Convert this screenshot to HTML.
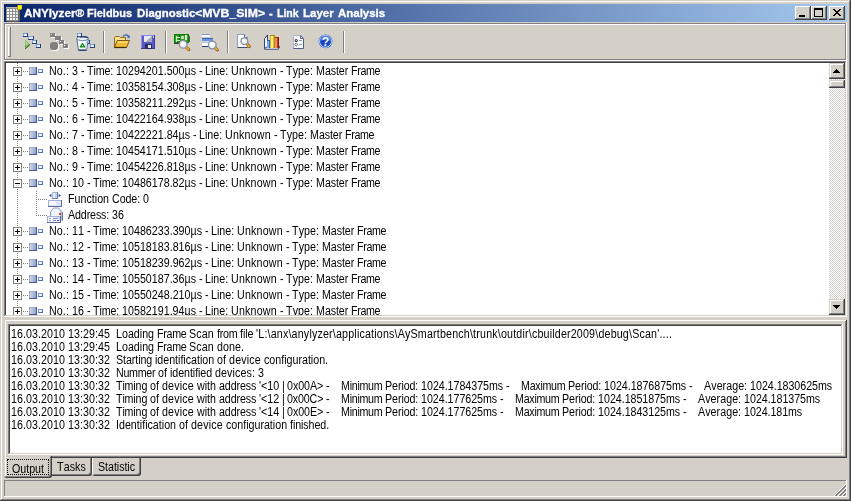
<!DOCTYPE html><html><head><meta charset="utf-8"><title>ANYlyzer</title><style>
    *{box-sizing:border-box;margin:0;padding:0}
    html,body{width:851px;height:501px;overflow:hidden;background:#d4d0c8}
    body{position:relative;font-family:"Liberation Sans",sans-serif;font-size:12px;color:#000}
    #w{position:absolute;left:0;top:0;width:851px;height:501px;will-change:transform}
.a{position:absolute}
    .t{position:absolute;white-space:pre;font-kerning:none;font-size:12px;line-height:14px;height:14px;transform-origin:0 0;transform:scaleX(.89)}
    .btn{position:absolute;background:#d4d0c8;box-shadow:inset -1px -1px 0 #404040,inset 1px 1px 0 #d4d0c8,inset -2px -2px 0 #808080,inset 2px 2px 0 #fff}
    .cbtn{position:absolute;background:#d4d0c8;box-shadow:inset -1px -1px 0 #404040,inset 1px 1px 0 #fff,inset -2px -2px 0 #808080}
    .sunk{position:absolute;background:#fff;box-shadow:inset -1px -1px 0 #fff,inset 1px 1px 0 #808080,inset -2px -2px 0 #d4d0c8,inset 2px 2px 0 #404040}
    .sep{position:absolute;width:2px;height:22px;top:31px;border-left:1px solid #808080;border-right:1px solid #fff}
    .ex{position:absolute;width:9px;height:9px;border:1px solid #808080;background:#fff}
    .ex i{position:absolute;left:1px;top:3px;width:5px;height:1px;background:#000}
    .ex b{position:absolute;left:3px;top:1px;width:1px;height:5px;background:#000}
    .hd{position:absolute;height:1px;background:repeating-linear-gradient(90deg,#808080 0 1px,transparent 1px 2px)}
    .vd{position:absolute;width:1px;background:repeating-linear-gradient(180deg,#808080 0 1px,transparent 1px 2px)}
    .n1{position:absolute;width:8px;height:8px;background:linear-gradient(90deg,#dcdee8,#8298cc);box-shadow:inset -1px -1px 0 #405a94,inset 1px 1px 0 #a0acc8}
    .n2{position:absolute;width:5px;height:4px;background:#eef4ff;border:1px solid #4c6cac;border-top-color:#7c98d0;border-left-color:#7c98d0}
    </style></head><body><div id="w"><div class="a" style="left:0;top:0;width:851px;height:501px;box-shadow:inset -1px -1px 0 #404040,inset 1px 1px 0 #d4d0c8,inset -2px -2px 0 #808080,inset 2px 2px 0 #fff"></div>
<div class="a" style="left:4px;top:4px;width:843px;height:18px;background:linear-gradient(90deg,#0a246a,#a6caf0)"></div>
<svg class="a" style="left:5px;top:4px" width="18" height="18" viewBox="0 0 18 18" shape-rendering="crispEdges"><rect x="1" y="3" width="13" height="14" fill="#909090"/><rect x="1" y="3" width="12" height="1" fill="#b8b8b8"/><rect x="13" y="5" width="2" height="12" fill="#686868"/><rect x="2" y="17" width="12" height="1" fill="#50505a"/><rect x="2" y="5" width="2" height="2" fill="#fff"/><rect x="5" y="5" width="2" height="2" fill="#fff"/><rect x="8" y="5" width="2" height="2" fill="#fff"/><rect x="11" y="5" width="2" height="2" fill="#e4e4e4"/><rect x="2" y="8" width="2" height="2" fill="#fff"/><rect x="5" y="8" width="2" height="2" fill="#fff"/><rect x="8" y="8" width="2" height="2" fill="#fff"/><rect x="11" y="8" width="2" height="2" fill="#e4e4e4"/><rect x="2" y="11" width="2" height="2" fill="#fff"/><rect x="5" y="11" width="2" height="2" fill="#fff"/><rect x="8" y="11" width="2" height="2" fill="#fff"/><rect x="11" y="11" width="2" height="2" fill="#e4e4e4"/><rect x="2" y="14" width="2" height="2" fill="#fff"/><rect x="5" y="14" width="2" height="2" fill="#fff"/><rect x="8" y="14" width="2" height="2" fill="#fff"/><rect x="11" y="14" width="2" height="2" fill="#e4e4e4"/><rect x="12" y="1" width="5" height="5" fill="#a8a010"/><rect x="13" y="1" width="4" height="4" fill="#e8e000"/><rect x="13" y="2" width="3" height="3" fill="#ffff10"/><rect x="12" y="1" width="1" height="1" fill="#605c20"/><rect x="16" y="5" width="1" height="1" fill="#605c20"/></svg>
<div class="a" id="title" style="left:4px;top:5px;height:16px;line-height:16px;font-size:11px;font-weight:bold;color:#fff;white-space:pre;font-kerning:none;-webkit-text-stroke:0.3px #fff"><span class="a" style="left:19.50px;top:0;transform-origin:0 0;transform:scaleX(1.066)">ANYlyzer® </span><span class="a" style="left:83.00px;top:0;transform-origin:0 0;transform:scaleX(0.998)">Fieldbus </span><span class="a" style="left:132.50px;top:0;transform-origin:0 0;transform:scaleX(1.037)">Diagnostic </span><span class="a" style="left:191.40px;top:0;transform-origin:0 0;transform:scaleX(1.113)">&lt;MVB_SIM&gt; </span><span class="a" style="left:265.00px;top:0;transform-origin:0 0;transform:scaleX(1.000)">- </span><span class="a" style="left:272.50px;top:0;transform-origin:0 0;transform:scaleX(0.958)">Link </span><span class="a" style="left:298.50px;top:0;transform-origin:0 0;transform:scaleX(1.047)">Layer </span><span class="a" style="left:333.50px;top:0;transform-origin:0 0;transform:scaleX(1.041)">Analysis </span></div>
<div class="cbtn" style="left:795px;top:6px;width:16px;height:14px"><div class="a" style="left:4px;top:9px;width:6px;height:2px;background:#000"></div></div>
<div class="cbtn" style="left:811px;top:6px;width:16px;height:14px"><div class="a" style="left:3px;top:2px;width:9px;height:9px;border:1px solid #000;border-top-width:2px"></div></div>
<div class="cbtn" style="left:829px;top:6px;width:16px;height:14px"><svg class="a" style="left:4px;top:3px" width="8" height="7" viewBox="0 0 8 7" shape-rendering="crispEdges"><path d="M0 0h2v1h1v1h2v-1h1v-1h2v1h-1v1h-1v1h-1v1h1v1h1v1h1v1h-2v-1h-1v-1h-2v1h-1v1h-2v-1h1v-1h1v-1h1v-1h-1v-1h-1v-1h-1z" fill="#000"/></svg></div>
<div class="a" style="left:4px;top:23px;width:843px;height:38px;box-shadow:inset -1px -1px 0 #fff,inset 1px 1px 0 #808080,inset -2px -2px 0 #808080,inset 2px 2px 0 #fff"></div>
<div class="a" style="left:8px;top:27px;width:3px;height:30px;box-shadow:inset -1px -1px 0 #808080,inset 1px 1px 0 #fff"></div>
<div class="sep" style="left:103px"></div>
<div class="sep" style="left:165px"></div>
<div class="sep" style="left:227px"></div>
<div class="sep" style="left:343px"></div>
<svg class="a" style="left:23px;top:33px" width="19" height="17" viewBox="0 0 19 17" shape-rendering="crispEdges"><rect x="0" y="0" width="5" height="4" fill="#24426f"/><rect x="0" y="0" width="4" height="3" fill="#7f9fd6"/><rect x="1" y="1" width="3" height="2" fill="#e4eeff"/><rect x="5" y="3" width="6" height="4" fill="#24426f"/><rect x="5" y="3" width="5" height="3" fill="#7f9fd6"/><rect x="6" y="4" width="4" height="2" fill="#e4eeff"/><rect x="9" y="7" width="5" height="4" fill="#24426f"/><rect x="9" y="7" width="4" height="3" fill="#7f9fd6"/><rect x="10" y="8" width="3" height="2" fill="#e4eeff"/><rect x="13" y="11" width="5" height="4" fill="#24426f"/><rect x="13" y="11" width="4" height="3" fill="#7f9fd6"/><rect x="14" y="12" width="3" height="2" fill="#e4eeff"/><g shape-rendering="auto"><path d="M2 7L7.2 11.5L2 16Z" fill="#6cb04c"/><path d="M2.3 7.8L6 11.3L2.3 12.5Z" fill="#a8d890"/><path d="M2 16L7.2 11.5" stroke="#2c5a1c" stroke-width="1"/></g></svg>
<svg class="a" style="left:50px;top:33px" width="20" height="19" viewBox="0 0 20 19" shape-rendering="crispEdges"><rect x="1" y="1" width="5" height="4" fill="#fff"/><rect x="0" y="0" width="5" height="4" fill="#808080"/><rect x="1" y="1" width="1" height="1" fill="#fff"/><rect x="6" y="4" width="6" height="4" fill="#fff"/><rect x="5" y="3" width="6" height="4" fill="#808080"/><rect x="10" y="8" width="5" height="4" fill="#fff"/><rect x="9" y="7" width="5" height="4" fill="#808080"/><rect x="10" y="8" width="1" height="1" fill="#fff"/><rect x="14" y="12" width="5" height="4" fill="#fff"/><rect x="13" y="11" width="5" height="4" fill="#808080"/><rect x="14" y="12" width="1" height="1" fill="#fff"/><g shape-rendering="auto"><rect x="1" y="10" width="8" height="8" rx="3" fill="#fff"/><rect x="0" y="9" width="8" height="8" rx="3" fill="#808080"/></g></svg>
<svg class="a" style="left:76px;top:33px" width="20" height="19" viewBox="0 0 20 19" shape-rendering="crispEdges"><rect x="1" y="0" width="5" height="4" fill="#24426f"/><rect x="1" y="0" width="4" height="3" fill="#7f9fd6"/><rect x="2" y="1" width="3" height="2" fill="#e4eeff"/><rect x="10" y="7" width="4" height="4" fill="#24426f"/><rect x="10" y="7" width="3" height="3" fill="#7f9fd6"/><rect x="11" y="8" width="2" height="2" fill="#e4eeff"/><rect x="14" y="11" width="5" height="4" fill="#24426f"/><rect x="14" y="11" width="4" height="3" fill="#7f9fd6"/><rect x="15" y="12" width="3" height="2" fill="#e4eeff"/><g shape-rendering="auto"><path d="M0.8 5.5L12.2 5.5L10.6 17.2L2.4 17.2Z" fill="#f4f8ff" stroke="#5a6c94" stroke-width="1"/><path d="M9.6 7L11.6 7L10.2 16.8L9 16.8Z" fill="#ccd8f0"/><ellipse cx="6.5" cy="5.6" rx="6" ry="1.9" fill="#f0f5ff" stroke="#6c7ca4" stroke-width="1"/><path d="M4 4.1Q9 3 12.3 5" fill="none" stroke="#24426f" stroke-width="1.4"/><path d="M2.6 17.2L10.4 17.2" stroke="#24426f" stroke-width="1.4"/><path d="M6.5 10.6L8.6 13.9L4.4 13.9Z" fill="#fff" stroke="#0c8a10" stroke-width="1.3" stroke-linejoin="round"/></g></svg>
<svg class="a" style="left:114px;top:34px" width="17" height="15" viewBox="0 0 17 15" shape-rendering="crispEdges"><g shape-rendering="auto"><path d="M0.5 13.5L0.5 3.5L1.5 2.5L5.5 2.5L6.5 3.5L11.5 3.5L11.5 6" fill="#f6e08a" stroke="#8c6c1c" stroke-width="1"/><path d="M0.5 13.5L3.2 6.5L15.5 6.5L12.5 13.5Z" fill="#f2bc30" stroke="#7c5a10" stroke-width="1"/><path d="M3.6 7.4L14 7.4L13.4 8.8L3.1 8.8Z" fill="#fbe08c"/><path d="M0.5 13.5L12.5 13.5" stroke="#3c2c08" stroke-width="1.2"/><path d="M9 2.6C10.5 0.2 13.6 0.2 14.8 2.8" fill="none" stroke="#3a66b4" stroke-width="1.3"/><path d="M12.8 3L15.8 1.2L15.6 4.6Z" fill="#3a66b4"/></g></svg>
<svg class="a" style="left:141px;top:35px" width="14" height="14" viewBox="0 0 14 14" shape-rendering="crispEdges"><rect x="0" y="0" width="14" height="14" fill="#5858c8"/><rect x="0" y="0" width="1" height="14" fill="#8c8ce4"/><rect x="0" y="0" width="14" height="1" fill="#8c8ce4"/><rect x="13" y="0" width="1" height="14" fill="#38389c"/><rect x="0" y="13" width="14" height="1" fill="#38389c"/><rect x="3" y="1" width="8" height="6" fill="#e8e8ec"/><g shape-rendering="auto"><path d="M11 1L11 7L4.5 7Z" fill="#a8a8b4"/></g><rect x="4" y="9" width="7" height="5" fill="#2c2c5c"/><rect x="7" y="10" width="3" height="3" fill="#e8e8ec"/><rect x="12" y="1" width="1" height="2" fill="#c8c8ff"/></svg>
<svg class="a" style="left:174px;top:34px" width="18" height="18" viewBox="0 0 18 18" shape-rendering="crispEdges"><rect x="0" y="0" width="15" height="9" fill="#10780c"/><rect x="1" y="1" width="13" height="7" fill="#28a41c"/><rect x="2" y="2" width="1" height="6" fill="#c8f0c0"/><rect x="5" y="1" width="1" height="7" fill="#0c5c08"/><rect x="2" y="3" width="4" height="1" fill="#c8f0c0"/><rect x="2" y="6" width="4" height="1" fill="#c8f0c0"/><rect x="7" y="2" width="3" height="3" fill="#d8c8e8"/><rect x="11" y="1" width="2" height="5" fill="#d0f0c8"/><rect x="15" y="2" width="1" height="6" fill="#606060"/><rect x="0" y="9" width="6" height="1" fill="#404040"/><g shape-rendering="auto"><path d="M11.5 12.7L14.8 15.6" stroke="#8a5a20" stroke-width="3" stroke-linecap="round"/><path d="M12.0 13.2L14.5 15.299999999999999" stroke="#f4a838" stroke-width="1.8" stroke-linecap="round"/><circle cx="9.2" cy="10.4" r="3.8" fill="#e6f0fb" stroke="#8a8f98" stroke-width="1.3"/><circle cx="8.399999999999999" cy="9.6" r="1.9999999999999998" fill="#fff"/></g></svg>
<svg class="a" style="left:202px;top:34px" width="18" height="19" viewBox="0 0 18 19" shape-rendering="crispEdges"><rect x="0" y="0" width="8" height="3" fill="#fff"/><rect x="0" y="0" width="8" height="1" fill="#7c9cd4"/><rect x="0" y="3" width="8" height="1" fill="#b4c4e4"/><rect x="0" y="4" width="11" height="4" fill="#6c94e0"/><rect x="0" y="4" width="11" height="1" fill="#3c64b4"/><rect x="0" y="7" width="11" height="1" fill="#c8d8f8"/><rect x="0" y="9" width="7" height="4" fill="#fff"/><rect x="0" y="12" width="7" height="1" fill="#1c3c7c"/><rect x="0" y="8" width="7" height="1" fill="#b4c4e4"/><g shape-rendering="auto"><path d="M12.6 13.3L15.4 16" stroke="#8a5a20" stroke-width="3" stroke-linecap="round"/><path d="M13.2 13.8L15.1 15.7" stroke="#f4a838" stroke-width="1.8" stroke-linecap="round"/><circle cx="10.3" cy="11" r="3.8" fill="#e6f0fb" stroke="#8a8f98" stroke-width="1.3"/><circle cx="9.5" cy="10.2" r="1.9999999999999998" fill="#fff"/></g></svg>
<svg class="a" style="left:237px;top:34px" width="16" height="16" viewBox="0 0 16 16" shape-rendering="crispEdges"><g shape-rendering="auto"><path d="M0.5 0.5L7.5 0.5L10.5 3.5L10.5 13.5L0.5 13.5Z" fill="#fbfcff" stroke="#8c9cc0" stroke-width="1"/><path d="M7.5 0.5L7.5 3.5L10.5 3.5" fill="#dfe6f6" stroke="#5c6c94" stroke-width="1"/><path d="M0.5 13.5L10.5 13.5" stroke="#3c4c74" stroke-width="1"/><path d="M9.4 9.2L12.4 12.6" stroke="#8a5a20" stroke-width="3" stroke-linecap="round"/><path d="M9.9 9.8L12.1 12.299999999999999" stroke="#f4a838" stroke-width="1.8" stroke-linecap="round"/><circle cx="7.4" cy="7.2" r="3.4" fill="#e6f0fb" stroke="#8a8f98" stroke-width="1.3"/><circle cx="6.6000000000000005" cy="6.4" r="1.5999999999999999" fill="#fff"/></g></svg>
<svg class="a" style="left:264px;top:34px" width="17" height="17" viewBox="0 0 17 17" shape-rendering="crispEdges"><g shape-rendering="auto"><path d="M0.5 14.6L0.5 4.6L3.5 0.9L3.5 12.4" fill="#f4f7fd" stroke="#2c4474" stroke-width="1"/><path d="M0.5 14.7L3.5 12.4L15.7 12.4L14.4 15.2L0.5 15.2Z" fill="#fff" stroke="#2c4474" stroke-width="1"/></g><rect x="3" y="6" width="3" height="8" fill="#3c6cd0"/><rect x="3" y="6" width="2" height="8" fill="#7ca4f0"/><rect x="3" y="6" width="3" height="1" fill="#2c54b0"/><rect x="6" y="1" width="5" height="13" fill="#d8b818"/><rect x="7" y="2" width="2" height="12" fill="#fcf088"/><rect x="6" y="1" width="5" height="1" fill="#a08810"/><rect x="10" y="2" width="1" height="12" fill="#b09410"/><rect x="11" y="3" width="4" height="11" fill="#c43818"/><rect x="11" y="4" width="2" height="10" fill="#f08868"/><rect x="14" y="3" width="1" height="11" fill="#8c2008"/><rect x="11" y="3" width="4" height="1" fill="#a42c10"/></svg>
<svg class="a" style="left:293px;top:35px" width="12" height="15" viewBox="0 0 12 15" shape-rendering="crispEdges"><g shape-rendering="auto"><path d="M0.5 0.5L7.5 0.5L10.5 3.5L10.5 13.5L0.5 13.5Z" fill="#fbfcff" stroke="#a8b4d0" stroke-width="1"/><path d="M7.5 0.5L7.5 3.5L10.5 3.5Z" fill="#c8d4ec" stroke="#5c6c94" stroke-width="1"/><path d="M0.5 13.5L10.5 13.5M10.5 4L10.5 13.5" stroke="#4c5c88" stroke-width="1"/><circle cx="3.2" cy="5.4" r="1.5" fill="#202020"/><circle cx="3.2" cy="5.4" r="0.6" fill="#fff"/><circle cx="3.2" cy="9.6" r="1.3" fill="#fff" stroke="#505050" stroke-width="0.8"/><path d="M6 5.5L9 5.5M6 9.5L9 9.5" stroke="#9098a8" stroke-width="1"/></g></svg>
<svg class="a" style="left:318px;top:34px" width="16" height="16" viewBox="0 0 16 16" shape-rendering="crispEdges"><g shape-rendering="auto"><circle cx="7.5" cy="7.3" r="6.9" fill="#2f62d8"/><circle cx="7.5" cy="7.3" r="5.9" fill="none" stroke="#e8f0ff" stroke-width="1"/><circle cx="7.5" cy="7.3" r="5.3" fill="#1846c0"/><path d="M1.6 7.3A5.9 5.9 0 0 1 13.4 7.3A8 5 0 0 0 1.6 7.3Z" fill="#4a80e8"/><text x="7.6" y="11.6" font-family="Liberation Sans,sans-serif" font-size="12" font-weight="bold" fill="#fff" text-anchor="middle">?</text></g></svg>
<div class="sunk" style="left:4px;top:61px;width:843px;height:256px"></div>
<div class="a" id="tree" style="left:6px;top:63px;width:823px;height:252px;overflow:hidden;background:#fff">
<div class="vd" style="left:11px;top:0;height:252px"></div>
<div class="hd" style="left:17px;top:8px;width:6px"></div>
<div class="ex" style="left:7px;top:4px"><i></i><b></b></div>
<div class="n1" style="left:23px;top:4px"></div><div class="n2" style="left:32px;top:6px"></div>
<div class="t" style="left:43px;top:1px"><span style="letter-spacing:0.100px">No.: </span><span style="letter-spacing:0.052px">3 </span><span style="letter-spacing:-0.294px">- </span><span style="letter-spacing:-0.125px">Time: </span><span style="letter-spacing:0.018px">10294201.500µs </span><span style="letter-spacing:-0.294px">- </span><span style="letter-spacing:-0.024px">Line: </span><span style="letter-spacing:0.212px">Unknown </span><span style="letter-spacing:-0.294px">- </span><span style="letter-spacing:0.060px">Type: </span><span style="letter-spacing:-0.097px">Master </span><span style="letter-spacing:-0.417px">Frame</span></div>
<div class="hd" style="left:17px;top:24px;width:6px"></div>
<div class="ex" style="left:7px;top:20px"><i></i><b></b></div>
<div class="n1" style="left:23px;top:20px"></div><div class="n2" style="left:32px;top:22px"></div>
<div class="t" style="left:43px;top:17px"><span style="letter-spacing:0.100px">No.: </span><span style="letter-spacing:0.052px">4 </span><span style="letter-spacing:-0.294px">- </span><span style="letter-spacing:-0.125px">Time: </span><span style="letter-spacing:0.018px">10358154.308µs </span><span style="letter-spacing:-0.294px">- </span><span style="letter-spacing:-0.024px">Line: </span><span style="letter-spacing:0.212px">Unknown </span><span style="letter-spacing:-0.294px">- </span><span style="letter-spacing:0.060px">Type: </span><span style="letter-spacing:-0.097px">Master </span><span style="letter-spacing:-0.417px">Frame</span></div>
<div class="hd" style="left:17px;top:40px;width:6px"></div>
<div class="ex" style="left:7px;top:36px"><i></i><b></b></div>
<div class="n1" style="left:23px;top:36px"></div><div class="n2" style="left:32px;top:38px"></div>
<div class="t" style="left:43px;top:33px"><span style="letter-spacing:0.100px">No.: </span><span style="letter-spacing:0.052px">5 </span><span style="letter-spacing:-0.294px">- </span><span style="letter-spacing:-0.125px">Time: </span><span style="letter-spacing:0.018px">10358211.292µs </span><span style="letter-spacing:-0.294px">- </span><span style="letter-spacing:-0.024px">Line: </span><span style="letter-spacing:0.212px">Unknown </span><span style="letter-spacing:-0.294px">- </span><span style="letter-spacing:0.060px">Type: </span><span style="letter-spacing:-0.097px">Master </span><span style="letter-spacing:-0.417px">Frame</span></div>
<div class="hd" style="left:17px;top:56px;width:6px"></div>
<div class="ex" style="left:7px;top:52px"><i></i><b></b></div>
<div class="n1" style="left:23px;top:52px"></div><div class="n2" style="left:32px;top:54px"></div>
<div class="t" style="left:43px;top:49px"><span style="letter-spacing:0.100px">No.: </span><span style="letter-spacing:0.052px">6 </span><span style="letter-spacing:-0.294px">- </span><span style="letter-spacing:-0.125px">Time: </span><span style="letter-spacing:0.018px">10422164.938µs </span><span style="letter-spacing:-0.294px">- </span><span style="letter-spacing:-0.024px">Line: </span><span style="letter-spacing:0.212px">Unknown </span><span style="letter-spacing:-0.294px">- </span><span style="letter-spacing:0.060px">Type: </span><span style="letter-spacing:-0.097px">Master </span><span style="letter-spacing:-0.417px">Frame</span></div>
<div class="hd" style="left:17px;top:72px;width:6px"></div>
<div class="ex" style="left:7px;top:68px"><i></i><b></b></div>
<div class="n1" style="left:23px;top:68px"></div><div class="n2" style="left:32px;top:70px"></div>
<div class="t" style="left:43px;top:65px"><span style="letter-spacing:0.100px">No.: </span><span style="letter-spacing:0.052px">7 </span><span style="letter-spacing:-0.294px">- </span><span style="letter-spacing:-0.125px">Time: </span><span style="letter-spacing:0.014px">10422221.84µs </span><span style="letter-spacing:-0.294px">- </span><span style="letter-spacing:-0.024px">Line: </span><span style="letter-spacing:0.212px">Unknown </span><span style="letter-spacing:-0.294px">- </span><span style="letter-spacing:0.060px">Type: </span><span style="letter-spacing:-0.097px">Master </span><span style="letter-spacing:-0.417px">Frame</span></div>
<div class="hd" style="left:17px;top:88px;width:6px"></div>
<div class="ex" style="left:7px;top:84px"><i></i><b></b></div>
<div class="n1" style="left:23px;top:84px"></div><div class="n2" style="left:32px;top:86px"></div>
<div class="t" style="left:43px;top:81px"><span style="letter-spacing:0.100px">No.: </span><span style="letter-spacing:0.052px">8 </span><span style="letter-spacing:-0.294px">- </span><span style="letter-spacing:-0.125px">Time: </span><span style="letter-spacing:0.018px">10454171.510µs </span><span style="letter-spacing:-0.294px">- </span><span style="letter-spacing:-0.024px">Line: </span><span style="letter-spacing:0.212px">Unknown </span><span style="letter-spacing:-0.294px">- </span><span style="letter-spacing:0.060px">Type: </span><span style="letter-spacing:-0.097px">Master </span><span style="letter-spacing:-0.417px">Frame</span></div>
<div class="hd" style="left:17px;top:104px;width:6px"></div>
<div class="ex" style="left:7px;top:100px"><i></i><b></b></div>
<div class="n1" style="left:23px;top:100px"></div><div class="n2" style="left:32px;top:102px"></div>
<div class="t" style="left:43px;top:97px"><span style="letter-spacing:0.100px">No.: </span><span style="letter-spacing:0.052px">9 </span><span style="letter-spacing:-0.294px">- </span><span style="letter-spacing:-0.125px">Time: </span><span style="letter-spacing:0.018px">10454226.818µs </span><span style="letter-spacing:-0.294px">- </span><span style="letter-spacing:-0.024px">Line: </span><span style="letter-spacing:0.212px">Unknown </span><span style="letter-spacing:-0.294px">- </span><span style="letter-spacing:0.060px">Type: </span><span style="letter-spacing:-0.097px">Master </span><span style="letter-spacing:-0.417px">Frame</span></div>
<div class="hd" style="left:17px;top:120px;width:6px"></div>
<div class="ex" style="left:7px;top:116px"><i></i></div>
<div class="n1" style="left:23px;top:116px"></div><div class="n2" style="left:32px;top:118px"></div>
<div class="t" style="left:43px;top:113px"><span style="letter-spacing:0.100px">No.: </span><span style="letter-spacing:0.057px">10 </span><span style="letter-spacing:-0.294px">- </span><span style="letter-spacing:-0.125px">Time: </span><span style="letter-spacing:0.014px">10486178.82µs </span><span style="letter-spacing:-0.294px">- </span><span style="letter-spacing:-0.024px">Line: </span><span style="letter-spacing:0.212px">Unknown </span><span style="letter-spacing:-0.294px">- </span><span style="letter-spacing:0.060px">Type: </span><span style="letter-spacing:-0.097px">Master </span><span style="letter-spacing:-0.417px">Frame</span></div>
<div class="hd" style="left:30px;top:136px;width:11px"></div>
<svg class="a" style="left:41px;top:128px" width="16" height="16" viewBox="0 0 16 16" shape-rendering="crispEdges"><g shape-rendering="auto"><path d="M2 4.5L4.4 2.7L4.4 6.3Z M14 4.5L11.6 2.7L11.6 6.3Z" fill="#2c54b8"/></g><rect x="5" y="1" width="6" height="7" fill="#6c7cac"/><rect x="5" y="1" width="5" height="6" fill="#a4b0d4"/><rect x="6" y="2" width="4" height="5" fill="#c4d0ec"/><rect x="6" y="2" width="2" height="5" fill="#f0f4fc"/><rect x="1" y="9" width="14" height="7" fill="#5c6c9c"/><rect x="1" y="9" width="13" height="6" fill="#a4b0d4"/><rect x="2" y="10" width="12" height="5" fill="#dce4f8"/><rect x="2" y="10" width="7" height="4" fill="#f8faff"/></svg>
<div class="t" style="left:62px;top:129px"><span style="letter-spacing:0.009px">Function </span><span style="letter-spacing:-0.087px">Code: </span><span style="letter-spacing:0.068px">0</span></div>
<div class="hd" style="left:30px;top:152px;width:11px"></div>
<svg class="a" style="left:41px;top:144px" width="16" height="16" viewBox="0 0 16 16" shape-rendering="crispEdges"><g shape-rendering="auto"><path d="M3.5 13L3.5 5L6.5 1L11.5 1L15.5 5.5L15.5 13Z" fill="#f2f5fc" stroke="#8c98bc" stroke-width="1"/><path d="M12 2L15.5 5.8L15.5 13L13.5 13L13.5 5.8Z" fill="#b4c0e0"/><path d="M15.5 5.5L15.5 13.5" stroke="#5c6c9c" stroke-width="1"/></g><rect x="12" y="6" width="2" height="2" fill="#e83810"/><rect x="0" y="9" width="14" height="7" fill="#5c6c9c"/><rect x="0" y="9" width="13" height="6" fill="#a4b0d4"/><rect x="1" y="10" width="12" height="5" fill="#f4f7ff"/><rect x="2" y="11" width="2" height="1" fill="#8c98bc"/><rect x="2" y="13" width="2" height="1" fill="#8c98bc"/><rect x="6" y="11" width="5" height="1" fill="#7c8cc8"/><rect x="6" y="13" width="3" height="1" fill="#7c8cc8"/><rect x="10" y="13" width="2" height="1" fill="#4c5ca8"/><g shape-rendering="auto"><path d="M9 10L13 10L13 14Z" fill="#c8d4f0"/></g></svg>
<div class="t" style="left:62px;top:145px"><span style="letter-spacing:-0.139px">Address: </span><span style="letter-spacing:0.068px">36</span></div>
<div class="hd" style="left:17px;top:168px;width:6px"></div>
<div class="ex" style="left:7px;top:164px"><i></i><b></b></div>
<div class="n1" style="left:23px;top:164px"></div><div class="n2" style="left:32px;top:166px"></div>
<div class="t" style="left:43px;top:161px"><span style="letter-spacing:0.100px">No.: </span><span style="letter-spacing:0.057px">11 </span><span style="letter-spacing:-0.294px">- </span><span style="letter-spacing:-0.125px">Time: </span><span style="letter-spacing:0.018px">10486233.390µs </span><span style="letter-spacing:-0.294px">- </span><span style="letter-spacing:-0.024px">Line: </span><span style="letter-spacing:0.212px">Unknown </span><span style="letter-spacing:-0.294px">- </span><span style="letter-spacing:0.060px">Type: </span><span style="letter-spacing:-0.097px">Master </span><span style="letter-spacing:-0.417px">Frame</span></div>
<div class="hd" style="left:17px;top:184px;width:6px"></div>
<div class="ex" style="left:7px;top:180px"><i></i><b></b></div>
<div class="n1" style="left:23px;top:180px"></div><div class="n2" style="left:32px;top:182px"></div>
<div class="t" style="left:43px;top:177px"><span style="letter-spacing:0.100px">No.: </span><span style="letter-spacing:0.057px">12 </span><span style="letter-spacing:-0.294px">- </span><span style="letter-spacing:-0.125px">Time: </span><span style="letter-spacing:0.018px">10518183.816µs </span><span style="letter-spacing:-0.294px">- </span><span style="letter-spacing:-0.024px">Line: </span><span style="letter-spacing:0.212px">Unknown </span><span style="letter-spacing:-0.294px">- </span><span style="letter-spacing:0.060px">Type: </span><span style="letter-spacing:-0.097px">Master </span><span style="letter-spacing:-0.417px">Frame</span></div>
<div class="hd" style="left:17px;top:200px;width:6px"></div>
<div class="ex" style="left:7px;top:196px"><i></i><b></b></div>
<div class="n1" style="left:23px;top:196px"></div><div class="n2" style="left:32px;top:198px"></div>
<div class="t" style="left:43px;top:193px"><span style="letter-spacing:0.100px">No.: </span><span style="letter-spacing:0.057px">13 </span><span style="letter-spacing:-0.294px">- </span><span style="letter-spacing:-0.125px">Time: </span><span style="letter-spacing:0.018px">10518239.962µs </span><span style="letter-spacing:-0.294px">- </span><span style="letter-spacing:-0.024px">Line: </span><span style="letter-spacing:0.212px">Unknown </span><span style="letter-spacing:-0.294px">- </span><span style="letter-spacing:0.060px">Type: </span><span style="letter-spacing:-0.097px">Master </span><span style="letter-spacing:-0.417px">Frame</span></div>
<div class="hd" style="left:17px;top:216px;width:6px"></div>
<div class="ex" style="left:7px;top:212px"><i></i><b></b></div>
<div class="n1" style="left:23px;top:212px"></div><div class="n2" style="left:32px;top:214px"></div>
<div class="t" style="left:43px;top:209px"><span style="letter-spacing:0.100px">No.: </span><span style="letter-spacing:0.057px">14 </span><span style="letter-spacing:-0.294px">- </span><span style="letter-spacing:-0.125px">Time: </span><span style="letter-spacing:0.014px">10550187.36µs </span><span style="letter-spacing:-0.294px">- </span><span style="letter-spacing:-0.024px">Line: </span><span style="letter-spacing:0.212px">Unknown </span><span style="letter-spacing:-0.294px">- </span><span style="letter-spacing:0.060px">Type: </span><span style="letter-spacing:-0.097px">Master </span><span style="letter-spacing:-0.417px">Frame</span></div>
<div class="hd" style="left:17px;top:232px;width:6px"></div>
<div class="ex" style="left:7px;top:228px"><i></i><b></b></div>
<div class="n1" style="left:23px;top:228px"></div><div class="n2" style="left:32px;top:230px"></div>
<div class="t" style="left:43px;top:225px"><span style="letter-spacing:0.100px">No.: </span><span style="letter-spacing:0.057px">15 </span><span style="letter-spacing:-0.294px">- </span><span style="letter-spacing:-0.125px">Time: </span><span style="letter-spacing:0.018px">10550248.210µs </span><span style="letter-spacing:-0.294px">- </span><span style="letter-spacing:-0.024px">Line: </span><span style="letter-spacing:0.212px">Unknown </span><span style="letter-spacing:-0.294px">- </span><span style="letter-spacing:0.060px">Type: </span><span style="letter-spacing:-0.097px">Master </span><span style="letter-spacing:-0.417px">Frame</span></div>
<div class="hd" style="left:17px;top:248px;width:6px"></div>
<div class="ex" style="left:7px;top:244px"><i></i><b></b></div>
<div class="n1" style="left:23px;top:244px"></div><div class="n2" style="left:32px;top:246px"></div>
<div class="t" style="left:43px;top:241px"><span style="letter-spacing:0.100px">No.: </span><span style="letter-spacing:0.057px">16 </span><span style="letter-spacing:-0.294px">- </span><span style="letter-spacing:-0.125px">Time: </span><span style="letter-spacing:0.014px">10582191.94µs </span><span style="letter-spacing:-0.294px">- </span><span style="letter-spacing:-0.024px">Line: </span><span style="letter-spacing:0.212px">Unknown </span><span style="letter-spacing:-0.294px">- </span><span style="letter-spacing:0.060px">Type: </span><span style="letter-spacing:-0.097px">Master </span><span style="letter-spacing:-0.417px">Frame</span></div>
<div class="vd" style="left:30px;top:128px;height:25px"></div>
</div>
<div class="a" style="left:829px;top:63px;width:16px;height:252px;background:repeating-conic-gradient(#fff 0 25%,#d4d0c8 0 50%) 0 0/2px 2px"></div>
<div class="btn" style="left:829px;top:63px;width:16px;height:16px"><svg class="a" style="left:4px;top:6px" width="7" height="4" shape-rendering="crispEdges"><path d="M3 0h1v1h1v1h1v1h1v1h-7v-1h1v-1h1v-1h1z"/></svg></div>
<div class="btn" style="left:829px;top:80px;width:16px;height:8px"></div>
<div class="btn" style="left:829px;top:299px;width:16px;height:16px"><svg class="a" style="left:4px;top:6px" width="7" height="4" shape-rendering="crispEdges"><path d="M0 0h7v1h-1v1h-1v1h-1v1h-1v-1h-1v-1h-1v-1h-1z"/></svg></div>
<div class="a" style="left:4px;top:319px;width:843px;height:139px;box-shadow:inset -1px -1px 0 #404040,inset 1px 1px 0 #d4d0c8,inset -2px -2px 0 #808080,inset 2px 2px 0 #fff"></div>
<div class="a" style="left:846px;top:319px;width:1px;height:1px;background:#d4d0c8"></div><div class="a" style="left:845px;top:320px;width:1px;height:1px;background:#fff"></div>
<div class="sunk" style="left:8px;top:324px;width:835px;height:131px"></div>
<div class="t" style="left:11px;top:327px"><span style="letter-spacing:0.059px">16.03.2010 </span><span style="letter-spacing:0.055px">13:29:45  </span><span style="letter-spacing:0.003px">Loading </span><span style="letter-spacing:-0.341px">Frame </span><span style="letter-spacing:0.155px">Scan </span><span style="letter-spacing:-0.298px">from </span><span style="letter-spacing:-0.139px">file </span><span style="letter-spacing:0.205px">'L:\anx\anylyzer\applications\AySmartbench\trunk\outdir\cbuilder2009\debug\Scan'....</span></div>
<div class="t" style="left:11px;top:340px"><span style="letter-spacing:0.059px">16.03.2010 </span><span style="letter-spacing:0.055px">13:29:45  </span><span style="letter-spacing:0.003px">Loading </span><span style="letter-spacing:-0.341px">Frame </span><span style="letter-spacing:0.155px">Scan </span><span style="letter-spacing:0.062px">done.</span></div>
<div class="t" style="left:11px;top:353px"><span style="letter-spacing:0.059px">16.03.2010 </span><span style="letter-spacing:0.055px">13:30:32  </span><span style="letter-spacing:-0.097px">Starting </span><span style="letter-spacing:-0.025px">identification </span><span style="letter-spacing:0.047px">of </span><span style="letter-spacing:0.186px">device </span><span style="letter-spacing:-0.010px">configuration.</span></div>
<div class="t" style="left:11px;top:366px"><span style="letter-spacing:0.059px">16.03.2010 </span><span style="letter-spacing:0.055px">13:30:32  </span><span style="letter-spacing:-0.306px">Nummer </span><span style="letter-spacing:0.047px">of </span><span style="letter-spacing:-0.073px">identified </span><span style="letter-spacing:0.107px">devices: </span><span style="letter-spacing:0.068px">3</span></div>
<div class="t" style="left:11px;top:379px"><span style="letter-spacing:0.059px">16.03.2010 </span><span style="letter-spacing:0.055px">13:30:32  </span><span style="letter-spacing:-0.163px">Timing </span><span style="letter-spacing:0.047px">of </span><span style="letter-spacing:0.186px">device </span><span style="letter-spacing:0.009px">with </span><span style="letter-spacing:-0.135px">address </span><span style="letter-spacing:-0.028px">'&lt;10 </span><span style="letter-spacing:-0.417px">| </span><span style="letter-spacing:-0.078px">0x00A&gt; </span><span style="letter-spacing:-0.096px">-    </span><span style="letter-spacing:-0.320px">Minimum </span><span style="letter-spacing:-0.113px">Period: </span><span style="letter-spacing:-0.038px">1024.1784375ms </span><span style="letter-spacing:-0.096px">-    </span><span style="letter-spacing:-0.316px">Maximum </span><span style="letter-spacing:-0.113px">Period: </span><span style="letter-spacing:-0.038px">1024.1876875ms </span><span style="letter-spacing:-0.096px">-    </span><span style="letter-spacing:0.036px">Average: </span><span style="letter-spacing:-0.043px">1024.1830625ms</span></div>
<div class="t" style="left:11px;top:392px"><span style="letter-spacing:0.059px">16.03.2010 </span><span style="letter-spacing:0.055px">13:30:32  </span><span style="letter-spacing:-0.163px">Timing </span><span style="letter-spacing:0.047px">of </span><span style="letter-spacing:0.186px">device </span><span style="letter-spacing:0.009px">with </span><span style="letter-spacing:-0.135px">address </span><span style="letter-spacing:-0.028px">'&lt;12 </span><span style="letter-spacing:-0.417px">| </span><span style="letter-spacing:-0.173px">0x00C&gt; </span><span style="letter-spacing:-0.096px">-    </span><span style="letter-spacing:-0.320px">Minimum </span><span style="letter-spacing:-0.113px">Period: </span><span style="letter-spacing:-0.046px">1024.177625ms </span><span style="letter-spacing:-0.096px">-    </span><span style="letter-spacing:-0.316px">Maximum </span><span style="letter-spacing:-0.113px">Period: </span><span style="letter-spacing:-0.038px">1024.1851875ms </span><span style="letter-spacing:-0.096px">-    </span><span style="letter-spacing:0.036px">Average: </span><span style="letter-spacing:-0.052px">1024.181375ms</span></div>
<div class="t" style="left:11px;top:405px"><span style="letter-spacing:0.059px">16.03.2010 </span><span style="letter-spacing:0.055px">13:30:32  </span><span style="letter-spacing:-0.163px">Timing </span><span style="letter-spacing:0.047px">of </span><span style="letter-spacing:0.186px">device </span><span style="letter-spacing:0.009px">with </span><span style="letter-spacing:-0.135px">address </span><span style="letter-spacing:-0.028px">'&lt;14 </span><span style="letter-spacing:-0.417px">| </span><span style="letter-spacing:-0.078px">0x00E&gt; </span><span style="letter-spacing:-0.096px">-    </span><span style="letter-spacing:-0.320px">Minimum </span><span style="letter-spacing:-0.113px">Period: </span><span style="letter-spacing:-0.046px">1024.177625ms </span><span style="letter-spacing:-0.096px">-    </span><span style="letter-spacing:-0.316px">Maximum </span><span style="letter-spacing:-0.113px">Period: </span><span style="letter-spacing:-0.038px">1024.1843125ms </span><span style="letter-spacing:-0.096px">-    </span><span style="letter-spacing:0.036px">Average: </span><span style="letter-spacing:-0.088px">1024.181ms</span></div>
<div class="t" style="left:11px;top:418px"><span style="letter-spacing:0.059px">16.03.2010 </span><span style="letter-spacing:0.055px">13:30:32  </span><span style="letter-spacing:0.005px">Identification </span><span style="letter-spacing:0.047px">of </span><span style="letter-spacing:0.186px">device </span><span style="letter-spacing:-0.010px">configuration </span><span style="letter-spacing:-0.097px">finished.</span></div>
<div class="a" style="left:52px;top:458px;width:40px;height:18px;box-shadow:inset -1px -1px 0 #404040,inset -2px -2px 0 #808080;border-radius:0 0 3px 0"></div>
<div class="a" style="left:92px;top:458px;width:49px;height:18px;box-shadow:inset -1px -1px 0 #404040,inset 1px 0 0 #fff,inset -2px -2px 0 #808080;border-radius:0 0 3px 3px"></div>
<div class="a" style="left:4px;top:456px;width:48px;height:22px;background:#d4d0c8;box-shadow:inset -1px -1px 0 #404040,inset 1px 0 0 #d4d0c8,inset -2px -2px 0 #808080,inset 2px 0 0 #fff;border-radius:0 0 3px 3px"></div>
<div class="a" style="left:7px;top:459px;width:42px;height:16px;border:1px dotted #000"></div>
<div class="t" style="left:12px;top:462px"><span style="letter-spacing:-0.011px">Output</span></div>
<div class="t" style="left:57px;top:460px"><span style="letter-spacing:0.116px">Tasks</span></div>
<div class="t" style="left:98px;top:460px"><span style="letter-spacing:-0.049px">Statistic</span></div>
<div class="a" style="left:4px;top:480px;width:843px;height:17px;box-shadow:inset -1px -1px 0 #fff,inset 1px 1px 0 #808080"></div>
<svg class="a" style="left:833px;top:483px" width="13" height="13" viewBox="0 0 13 13" shape-rendering="crispEdges"><g stroke-width="1" shape-rendering="auto"><path d="M0.5 13.5L13.5 0.5M4.5 13.5L13.5 4.5M8.5 13.5L13.5 8.5" stroke="#fff"/><path d="M1.5 13.5L13.5 1.5M2.5 13.5L13.5 2.5M5.5 13.5L13.5 5.5M6.5 13.5L13.5 6.5M9.5 13.5L13.5 9.5M10.5 13.5L13.5 10.5" stroke="#808080"/></g></svg></div></body></html>
